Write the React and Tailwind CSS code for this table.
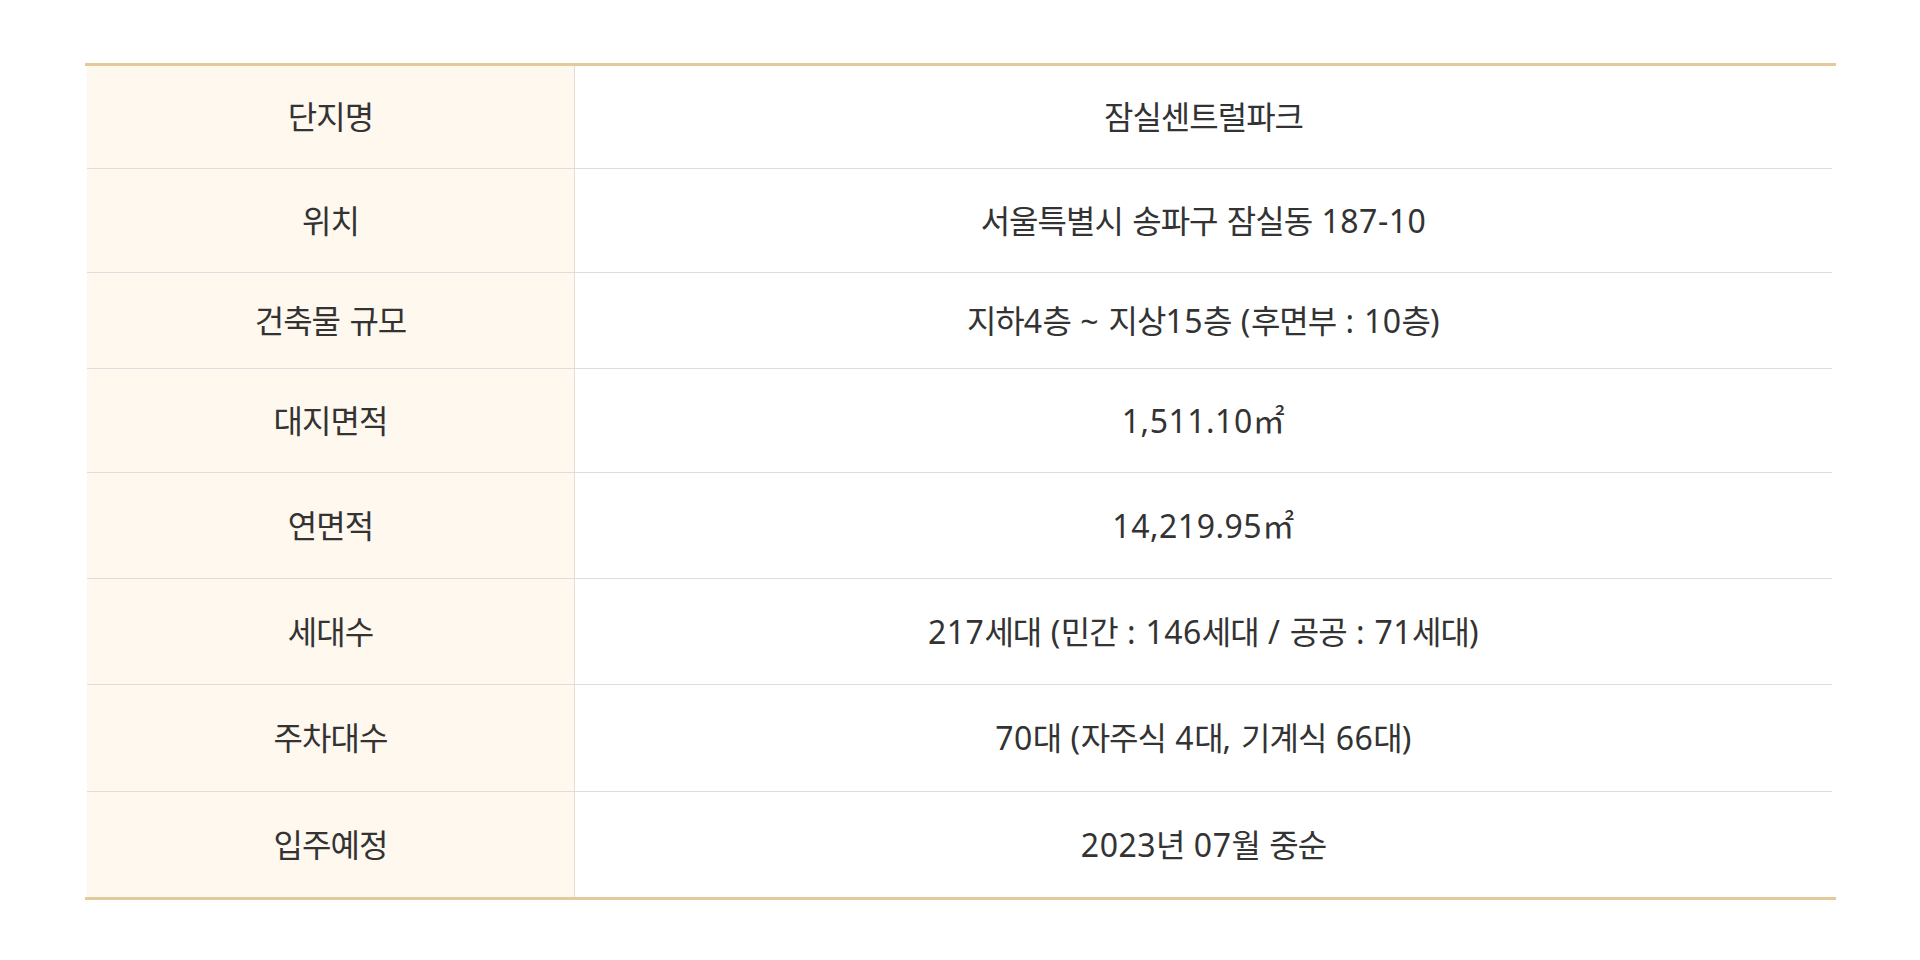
function Txt({ text }) {
  const parts = text.split(/([가-힣]+|\s+)/).filter((p) => p.length > 0);
  return (
    <span className="whitespace-pre">
      {parts.map((p, i) => {
        if (/^[가-힣]+$/.test(p)) {
          return (
            <span key={i} className="text-[32px] tracking-[-1px]">
              {p}
            </span>
          );
        }
        if (/^\s+$/.test(p)) {
          return (
            <span key={i} className="text-[32px] tracking-[1px]">
              {p}
            </span>
          );
        }
        return (
          <span key={i} className="text-[32px] tracking-[0.5px]">
            {p}
          </span>
        );
      })}
    </span>
  );
}

export default function App() {
  const rows = [
    ["단지명", "잠실센트럴파크", "h-[102px]"],
    ["위치", "서울특별시 송파구 잠실동 187-10", "h-[104px]"],
    ["건축물 규모", "지하4층 ~ 지상15층 (후면부 : 10층)", "h-[96px]"],
    ["대지면적", "1,511.10㎡", "h-[104px]"],
    ["연면적", "14,219.95㎡", "h-[106px]"],
    ["세대수", "217세대 (민간 : 146세대 / 공공 : 71세대)", "h-[106px]"],
    ["주차대수", "70대 (자주식 4대, 기계식 66대)", "h-[107px]"],
    ["입주예정", "2023년 07월 중순", "h-[106px]"],
  ];
  return (
    <div
      className="w-[1920px] h-[960px] bg-white pt-[63px] text-[#333333]"
      style={{ fontFamily: '"Noto Sans", "Noto Sans CJK KR", sans-serif' }}
    >
      <div className="ml-[85px] w-[1751px] border-t-[3px] border-b-[3px] border-[#e3c99b]">
        <div className="ml-[2px] w-[1745px]">
          {rows.map(([k, v, h], i) => (
            <div
              key={i}
              className={`flex ${h} ${i > 0 ? "border-t border-[#dddddd]" : ""}`}
            >
              <div className="w-[488px] shrink-0 bg-[#fff8ee] border-r border-[#e2ddd5] flex items-center justify-center leading-none">
                <Txt text={k} />
              </div>
              <div className="flex-1 flex items-center justify-center leading-none">
                <Txt text={v} />
              </div>
            </div>
          ))}
        </div>
      </div>
    </div>
  );
}
